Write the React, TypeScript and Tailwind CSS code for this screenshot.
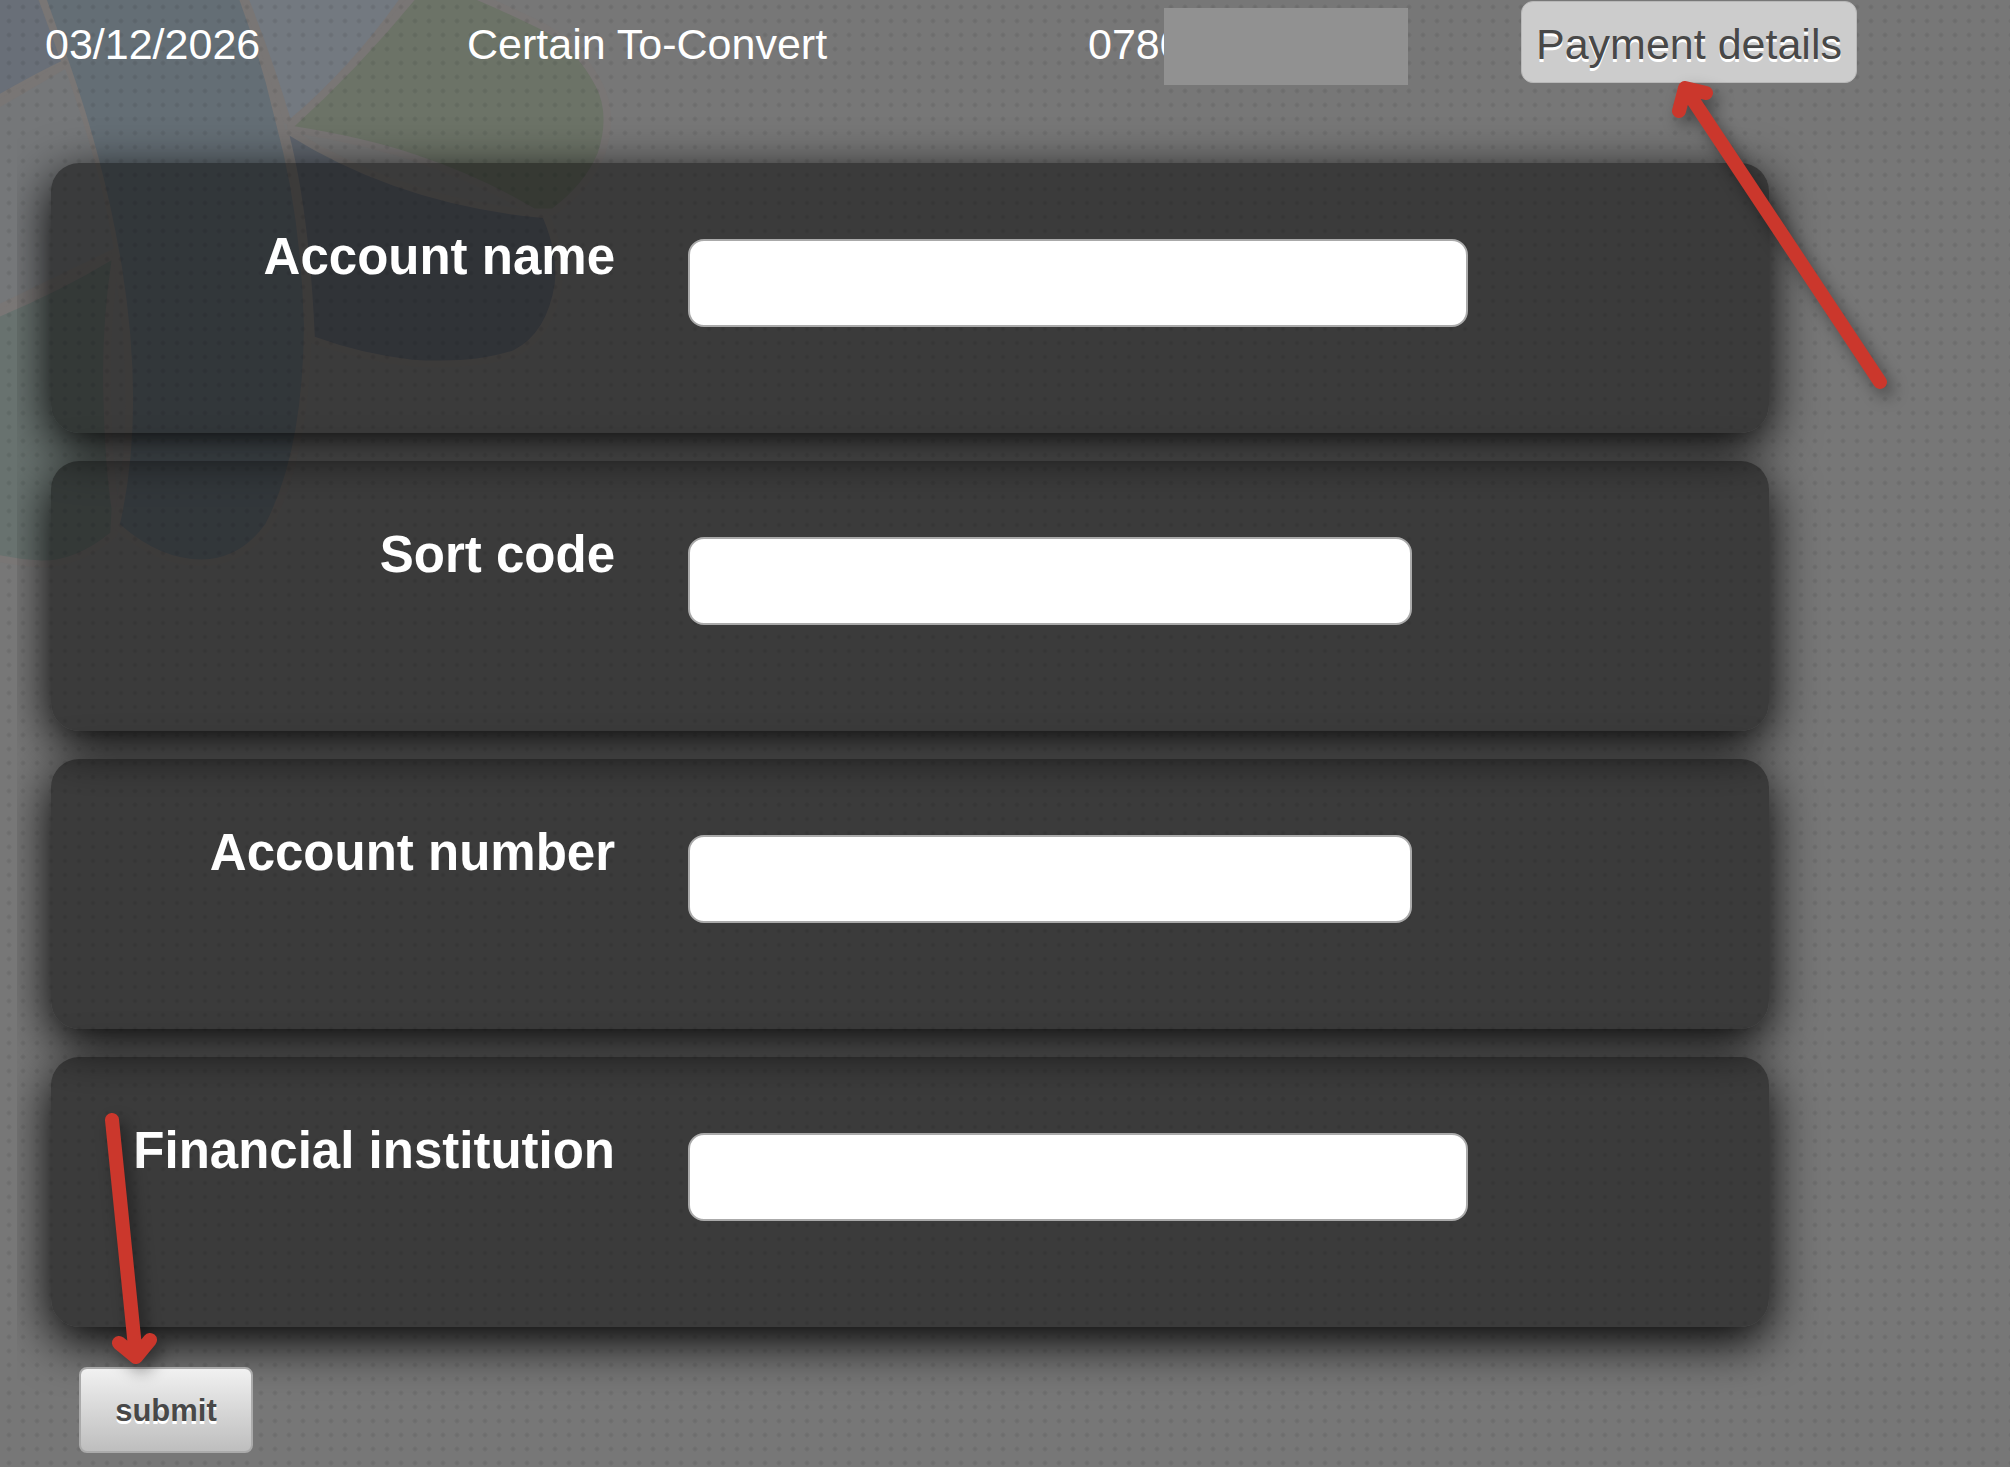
type Field = { id: string; label: string; width: string };

const fields: Field[] = [
  { id: 'account-name', label: 'Account name', width: 'w-[780px]' },
  { id: 'sort-code', label: 'Sort code', width: 'w-[724px]' },
  { id: 'account-number', label: 'Account number', width: 'w-[724px]' },
  { id: 'institution', label: 'Financial institution', width: 'w-[780px]' },
];

const petals: { d: string; fill: string }[] = [
  { fill: '#696f78', d: 'M-40 -20H85L145 160Q70 200 -40 270Z' },
  { fill: '#757779', d: 'M-40 305Q70 235 155 180Q240 440 270 650L-40 815Z' },
  { fill: '#68726f', d: 'M-40 845Q130 770 265 680Q240 860 246 1050Q250 1220 265 1330L262 1392Q180 1465 100 1465Q30 1462 -40 1440Z' },
  { fill: '#646e75', d: 'M105 -20L165 165Q250 430 290 700Q345 1080 285 1370Q380 1462 480 1462Q570 1460 630 1370Q720 1180 722 850Q715 560 655 320Q620 150 562 -20Z' },
  { fill: '#737980', d: 'M585 -20Q650 160 690 310Q840 170 960 -20Z' },
  { fill: '#6c7367', d: 'M1000 -20Q860 170 700 330Q870 360 990 405Q1140 460 1270 545H1312Q1390 480 1420 400Q1450 300 1415 225Q1370 130 1290 80Q1200 30 1090 -20Z' },
  { fill: '#60666f', d: 'M688 355Q950 535 1290 570Q1325 660 1318 740Q1300 870 1220 915Q1130 950 980 940Q860 925 748 880Q735 560 688 355Z' },
];

function Logo() {
  return (
    <svg
      className="pointer-events-none absolute left-0 top-0 h-[600px] w-[660px]"
      viewBox="0 0 1568 1568"
      preserveAspectRatio="none"
      aria-hidden="true"
    >
      {petals.map((p) => (
        <path key={`edge-${p.fill}`} d={p.d} fill="none" stroke="#797675" strokeWidth="36" strokeLinejoin="round" />
      ))}
      {petals.map((p) => (
        <path key={p.fill} d={p.d} fill={p.fill} />
      ))}
    </svg>
  );
}

function Arrow({ className, viewBox, d }: { className: string; viewBox: string; d: string }) {
  return (
    <svg
      className={`pointer-events-none absolute z-10 overflow-visible drop-shadow-[6px_8px_8px_rgba(0,0,0,0.4)] ${className}`}
      viewBox={viewBox}
      fill="none"
      stroke="#cb372c"
      strokeWidth="14"
      strokeLinecap="round"
      strokeLinejoin="round"
      aria-hidden="true"
    >
      <path d={d} />
    </svg>
  );
}

export default function App() {
  return (
    <div className="relative min-h-screen overflow-hidden bg-[#777777] font-['Liberation_Sans',Arial,sans-serif] text-white">
      <Logo />
      <div className="pointer-events-none absolute inset-0 bg-[radial-gradient(circle_at_9px_7px,rgba(0,0,0,0.1)_0px,rgba(0,0,0,0.05)_2px,transparent_3px)] bg-[length:14px_14px]" />

      <main className="relative ml-[17px] min-h-screen overflow-hidden pb-2">
        <header className="relative z-10 grid h-[163px] grid-cols-[422fr_621fr_433fr_489fr] items-start pl-7 text-[43px] leading-[48px]">
          <p className="pt-5">03/12/2026</p>
          <p className="pt-5">Certain To-Convert</p>
          <div className="relative pt-5">
            0780
            <span className="absolute left-[76px] top-2 h-[77px] w-[244px] bg-[#919191]" />
          </div>
          <div className="relative justify-self-start pt-px">
            <button
              type="button"
              className="block rounded-xl border border-[#b8b8b8] bg-[#cccccc] px-3.5 pb-3.5 pt-[18px] text-[#484848] [text-shadow:0_3px_0_#ffffff]"
            >
              Payment details
            </button>
            <Arrow
              className="left-[150px] top-[70px] h-[330px] w-[220px]"
              viewBox="0 0 220 330"
              d="M209 312L14 18M8 41L14 18L35 23"
            />
          </div>
        </header>

        <form className="pl-[34px] pr-[241px]">
          <div className="flex flex-col gap-7">
            {fields.map((f) => (
              <div
                key={f.id}
                className="grid h-[270px] grid-cols-[564fr_1081fr] items-start gap-[73px] rounded-[28px] bg-black/50 shadow-[0_14px_50px_#000000]"
              >
                <label htmlFor={f.id} className="pt-16 text-right text-[51px] font-bold leading-[60px]">
                  {f.label}
                </label>
                <div className="pt-[76px]">
                  <input
                    id={f.id}
                    type="text"
                    className={`block h-[88px] max-w-full rounded-2xl border-2 border-[#aaaaaa] bg-white px-4 text-[43px] text-[#333333] outline-none ${f.width}`}
                  />
                </div>
              </div>
            ))}
          </div>
          <div className="relative ml-7 mt-10 w-fit">
            <button
              type="submit"
              className="block h-[86px] w-[174px] rounded-lg border-2 border-[#aaaaaa] bg-gradient-to-b from-[#f1f1f1] to-[#bebebe] pt-0.5 text-[31px] font-bold text-[#484848] [text-shadow:0_3px_0_#ffffff]"
            >
              submit
            </button>
            <Arrow
              className="-top-[258px] left-[22px] h-[256px] w-[60px]"
              viewBox="0 0 60 256"
              d="M11 11L35 248M18 234L35 248L49 231"
            />
          </div>
        </form>
      </main>
    </div>
  );
}
